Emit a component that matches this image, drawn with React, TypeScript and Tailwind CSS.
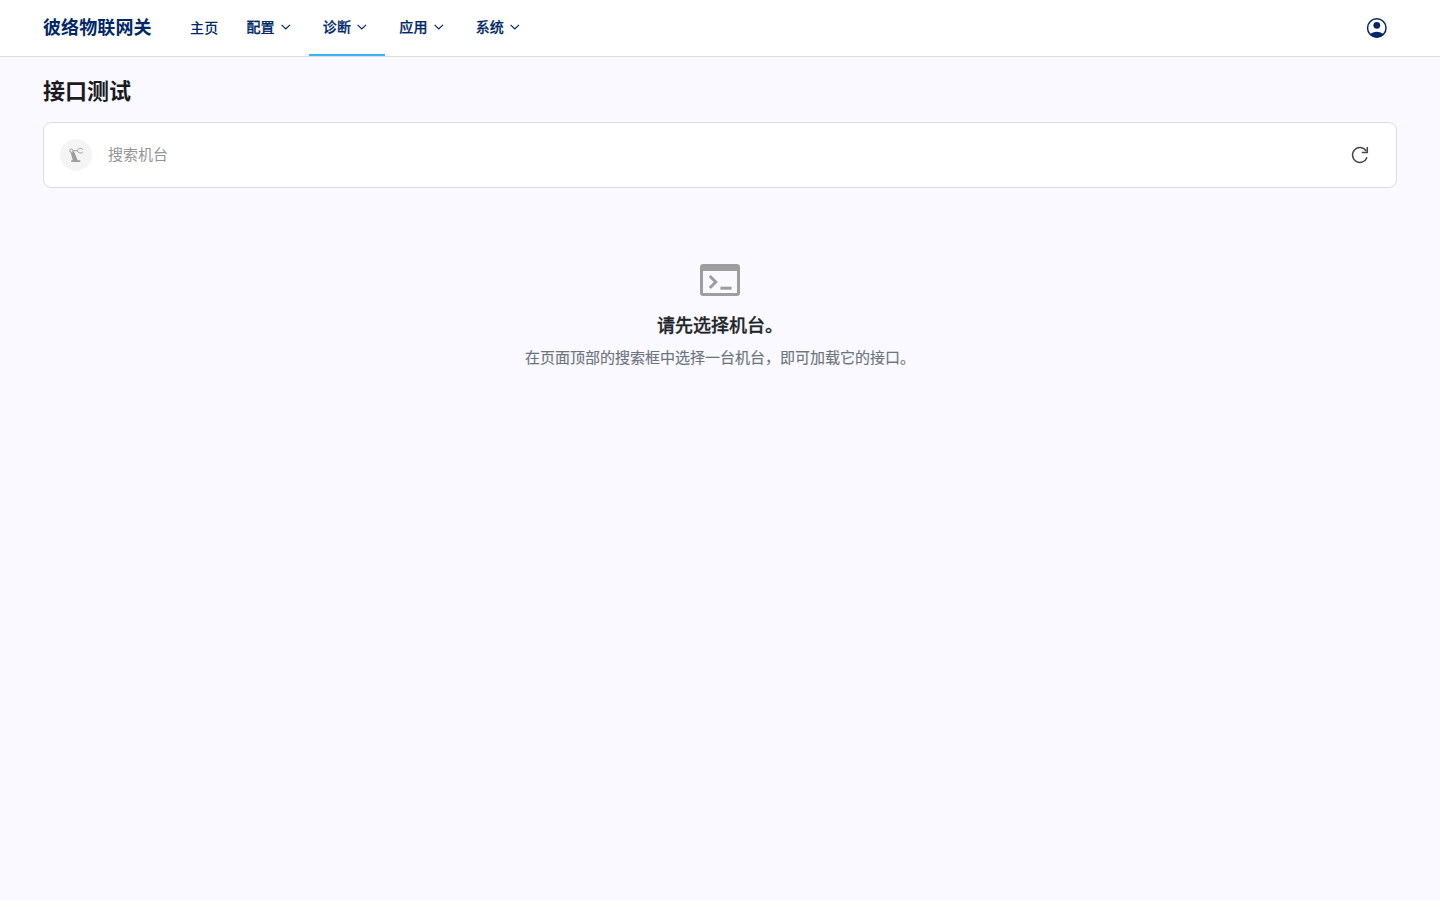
const menus = [
  { id: 'config', label: '配置', active: false },
  { id: 'diagnose', label: '诊断', active: true },
  { id: 'apps', label: '应用', active: false },
  { id: 'system', label: '系统', active: false },
];

const ChevronIcon = () => (
  <svg className="w-[18px] h-[18px]" viewBox="0 0 18 18" fill="none" stroke="currentColor" strokeWidth="1.2">
    <path d="M4.6 6.8L8.8 11L13 6.8" />
  </svg>
);

const AccountIcon = () => (
  <svg className="w-6 h-6" viewBox="0 0 24 24" fill="none">
    <circle cx="11.8" cy="12" r="9.25" stroke="currentColor" strokeWidth="1.5" />
    <circle cx="11.8" cy="9.3" r="3.4" fill="currentColor" />
    <path d="M4.8 18.2C6.8 16.6 9.2 15.7 11.8 15.7s5 .9 7 2.5C17.1 20.4 14.5 21.5 11.8 21.5s-5.3-1.1-7-3.3z" fill="currentColor" />
  </svg>
);

const RobotIcon = () => (
  <svg className="w-[18px] h-[18px]" viewBox="0 0 18 18" fill="none" stroke="currentColor" strokeWidth="1">
    <circle cx="4.3" cy="4.7" r="1.6" />
    <path d="M6 4.7h4.4" />
    <path d="M15.8 3.4C14.9 2.3 13.6 2.1 12.300 2.600 11.200 3 10.600 3.700 10.600 4.700s.6 1.700 1.700 2.100c1.300.5 2.600.3 3.500-.8" />
    <path d="M3.6 6.600l2.200-.4 1.200-.9 3.700 8.900h2.600v1.700H4.200v-1.700h1.600z" fill="currentColor" stroke="none" />
  </svg>
);

const RefreshIcon = () => (
  <svg className="w-6 h-6" viewBox="0 0 24 24" fill="none" stroke="currentColor" strokeWidth="1.5">
    <path d="M19 14.2A7.4 7.4 0 1 1 18.2 8" />
    <path d="M19.3 4.1v5.5h-5.5" />
  </svg>
);

const TerminalIcon = () => (
  <svg className="w-10 h-8" viewBox="0 0 40 32" fill="none" stroke="currentColor" strokeWidth="3">
    <rect x="1.5" y="1.5" width="37" height="29" rx="1.8" />
    <path d="M1.5 4.5h37" strokeWidth="5.2" />
    <path d="M9.8 12l6 6-6 6" />
    <path d="M20.4 24.2h11.2" />
  </svg>
);

const App = () => {
  return (
    <div className="min-h-screen bg-[#faf9ff] font-['Noto_Sans_CJK_SC',sans-serif] text-[#1b1b1f]">
      {/* Header */}
      <header className="h-[57px] bg-white border-b border-[#dddddf] pl-[43px] pr-[51px] flex justify-between items-center text-[#002868]">
        <div className="flex h-14">
          <div className="w-[133px] pb-1 flex items-center text-lg font-bold tracking-[0.1px] whitespace-nowrap">彼络物联网关</div>
          <nav className="flex text-sm font-medium tracking-[0.2px]">
            <a className="px-3.5 pb-0.5 flex items-center">主页</a>
            {menus.map((menu) => (
              <button
                key={menu.id}
                className={`px-3.5 flex items-center gap-0.5 border-b-2 ${
                  menu.active ? 'border-[#38b6f1]' : 'border-transparent'
                }`}
              >
                <span className="pb-0.5 [-webkit-text-stroke:0.25px]">{menu.label}</span>
                <ChevronIcon />
              </button>
            ))}
          </nav>
        </div>
        <button>
          <AccountIcon />
        </button>
      </header>

      <main className="px-[43px] pt-4">
        <h1 className="text-[22px] leading-8 font-bold">接口测试</h1>

        {/* Search */}
        <div className="mt-[17px] h-[66px] bg-white border border-[#dddddf] rounded-lg pl-4 pr-6 flex items-center">
          <div className="w-8 h-8 rounded-full bg-[#f4f4f4] text-[#9e9e9e] flex items-center justify-center">
            <RobotIcon />
          </div>
          <input
            type="text"
            placeholder="搜索机台"
            className="flex-1 ml-4 pb-0.5 text-[15px] leading-6 placeholder:text-[#949494] focus:outline-none"
          />
          <button className="text-[#46464f]">
            <RefreshIcon />
          </button>
        </div>

        {/* Empty state */}
        <div className="mt-[76px] flex flex-col items-center text-center">
          <div className="text-[#9e9e9e]">
            <TerminalIcon />
          </div>
          <p className="mt-3.5 text-lg leading-7 font-medium text-[#212529] [-webkit-text-stroke:0.3px]">请先选择机台。</p>
          <p className="mt-[7px] text-[15px] leading-6 text-[#6c757d] [-webkit-text-stroke:0.15px]">
            在页面顶部的搜索框中选择一台机台，即可加载它的接口。
          </p>
        </div>
      </main>
    </div>
  );
};

export default App;
